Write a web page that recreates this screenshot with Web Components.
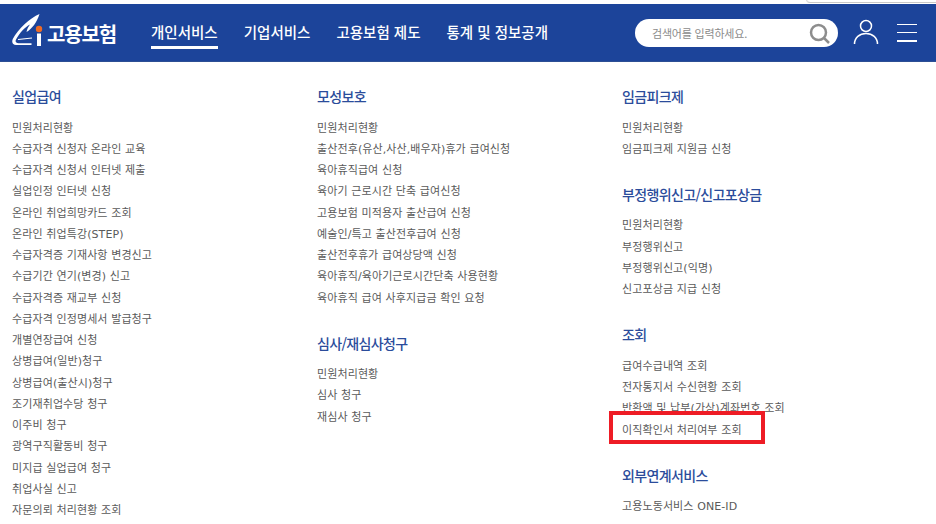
<!DOCTYPE html>
<html lang="ko"><head><meta charset="utf-8">
<style>
html,body{margin:0;padding:0;background:#fff;height:524px;overflow:hidden}
body{font-family:"DejaVu Sans","Noto Sans CJK KR",sans-serif;position:relative}
</style></head><body>
<template id="tpl-header">
<style>
:host{display:block;margin-top:4px;height:57px;background:#1c449a;border-bottom:1px solid #2d4f94;position:relative;font-family:"Noto Sans CJK KR",sans-serif}
.bar{display:flex;align-items:flex-start;height:57px;padding-left:12px}
.logo{display:flex;align-items:flex-start;width:105px;color:#fff;font-weight:700;font-size:20px;letter-spacing:-1.150px;white-space:nowrap;line-height:30px}
.logo svg{margin-top:10px;flex:none}
.logo span{margin:15px 0 0 4px;display:block}
nav{display:flex;margin:18px 0 0 34px;gap:26px;color:#fff;font-size:14.5px;font-weight:500}
.search{display:flex;align-items:center;justify-content:space-between;box-sizing:border-box;position:absolute;left:635px;top:15px;width:203px;height:28px;background:#fff;border-radius:14px;padding:0 7px 0 17px;color:#8b8b8b;font-size:11px;letter-spacing:-.2px}
.user{position:absolute;left:853px;top:15px}
.menu{position:absolute;left:897px;top:19.500px;width:20px;height:18px;display:flex;flex-direction:column;justify-content:space-between}
.menu i{display:block;height:1.500px;background:#fff}
</style>
<div class="bar">
<div class="logo"><svg width="31" height="33" viewBox="0 0 31 33"><path d="M27.500 0C18 4 6 15 .8 25c-1.500 3.500.2 6 3.200 6h15.500v-1.800H6.500c-2.500 0-3.500-1.700-2.500-3.700C8 18.500 13 13 18 10.500 16 13 15 15.500 14.500 18 20 15 25 8 27.500 0Z" fill="#fff"/><path d="M6 25.500l14-1.500" stroke="#fff" stroke-width="1.200" fill="none"/><circle cx="27" cy="15" r="3.200" fill="#ee6b25"/><rect x="25" y="19.500" width="4" height="12.500" fill="#fff"/></svg><span><slot name="logo"></slot></span></div>
<nav><slot></slot></nav>
</div>
<div class="search"><span>검색어를 입력하세요.</span><svg width="23" height="23" viewBox="0 0 23 23" fill="none" stroke="#8d8d8d"><circle cx="10.500" cy="10.500" r="7.500" stroke-width="2.500"/><path d="M16 16l5 5" stroke-width="2.500"/></svg></div>
<svg class="user" width="26" height="26" viewBox="0 0 26 26" fill="none" stroke="#fff" stroke-width="1.500"><circle cx="13" cy="7" r="5.500"/><path d="M1.500 25C1.500 18.500 6.500 14.500 13 14.500S24.500 18.500 24.500 25"/></svg>
<div class="menu"><i></i><i></i><i></i></div>
</template>
<template id="tpl-link">
<style>
:host{display:block;line-height:20px;padding-bottom:4px;border-bottom:3px solid transparent;white-space:nowrap}
:host([active]){border-bottom-color:#fff}
</style><slot></slot>
</template>
<template id="tpl-group">
<style>
:host{display:block;margin-bottom:23.800px}
h2{margin:0 0 10.600px;font-family:"Noto Sans CJK KR",sans-serif;font-size:14px;line-height:21px;font-weight:500;color:#2b4c9b;letter-spacing:-.65px;white-space:nowrap}
</style>
<h2><slot name="title"></slot></h2>
<slot></slot>
</template>
<template id="tpl-item">
<style>
:host{display:block;position:relative;height:21.250px;line-height:21.250px;font-size:11px;letter-spacing:.1px;color:#5a5a5a;white-space:nowrap}
.mark{position:absolute;left:-13px;top:-9px;width:148px;height:25px;border:4px solid #ee1c25;display:none}
:host([marked]) .mark{display:block}
</style>
<slot></slot><span class="mark"></span>
</template>
<template id="tpl-columns">
<style>:host{display:grid;grid-template-columns:305px 305px 1fr;padding:24px 0 0 12px}</style>
<slot></slot>
</template>
<template id="tpl-edge">
<style>:host{display:block;position:absolute;left:806px;top:-6px;width:140px;height:8px;border-left:1px solid #d8d8d8;border-bottom:1px solid #c9c9c9;border-bottom-left-radius:4px}</style>
</template>
<script>
for (const [name,id] of [['ei-header','tpl-header'],['nav-link','tpl-link'],['menu-group','tpl-group'],['menu-item','tpl-item'],['menu-columns','tpl-columns'],['window-edge','tpl-edge']]) {
  customElements.define(name, class extends HTMLElement {
    constructor(){super();this.attachShadow({mode:'open'}).appendChild(document.getElementById(id).content.cloneNode(true));}
  });
}
</script>
<window-edge></window-edge>
<ei-header>
<span slot="logo">고용보험</span>
<nav-link active>개인서비스</nav-link>
<nav-link>기업서비스</nav-link>
<nav-link>고용보험 제도</nav-link>
<nav-link>통계 및 정보공개</nav-link>
</ei-header>
<menu-columns>
<div>
<menu-group><span slot="title">실업급여</span>
<menu-item>민원처리현황</menu-item><menu-item>수급자격 신청자 온라인 교육</menu-item><menu-item>수급자격 신청서 인터넷 제출</menu-item><menu-item>실업인정 인터넷 신청</menu-item><menu-item>온라인 취업희망카드 조회</menu-item><menu-item>온라인 취업특강(STEP)</menu-item><menu-item>수급자격증 기재사항 변경신고</menu-item><menu-item>수급기간 연기(변경) 신고</menu-item><menu-item>수급자격증 재교부 신청</menu-item><menu-item>수급자격 인정명세서 발급청구</menu-item><menu-item>개별연장급여 신청</menu-item><menu-item>상병급여(일반)청구</menu-item><menu-item>상병급여(출산시)청구</menu-item><menu-item>조기재취업수당 청구</menu-item><menu-item>이주비 청구</menu-item><menu-item>광역구직활동비 청구</menu-item><menu-item>미지급 실업급여 청구</menu-item><menu-item>취업사실 신고</menu-item><menu-item>자문의뢰 처리현황 조회</menu-item>
</menu-group>
</div>
<div>
<menu-group><span slot="title">모성보호</span>
<menu-item>민원처리현황</menu-item><menu-item>출산전후(유산,사산,배우자)휴가 급여신청</menu-item><menu-item>육아휴직급여 신청</menu-item><menu-item>육아기 근로시간 단축 급여신청</menu-item><menu-item>고용보험 미적용자 출산급여 신청</menu-item><menu-item>예술인/특고 출산전후급여 신청</menu-item><menu-item>출산전후휴가 급여상당액 신청</menu-item><menu-item>육아휴직/육아기근로시간단축 사용현황</menu-item><menu-item>육아휴직 급여 사후지급금 확인 요청</menu-item>
</menu-group>
<menu-group><span slot="title">심사/재심사청구</span>
<menu-item>민원처리현황</menu-item><menu-item>심사 청구</menu-item><menu-item>재심사 청구</menu-item>
</menu-group>
</div>
<div>
<menu-group><span slot="title">임금피크제</span>
<menu-item>민원처리현황</menu-item><menu-item>임금피크제 지원금 신청</menu-item>
</menu-group>
<menu-group><span slot="title">부정행위신고/신고포상금</span>
<menu-item>민원처리현황</menu-item><menu-item>부정행위신고</menu-item><menu-item>부정행위신고(익명)</menu-item><menu-item>신고포상금 지급 신청</menu-item>
</menu-group>
<menu-group><span slot="title">조회</span>
<menu-item>급여수급내역 조회</menu-item><menu-item>전자통지서 수신현황 조회</menu-item><menu-item>반환액 및 납부(가상)계좌번호 조회</menu-item><menu-item marked>이직확인서 처리여부 조회</menu-item>
</menu-group>
<menu-group><span slot="title">외부연계서비스</span>
<menu-item>고용노동서비스 ONE-ID</menu-item>
</menu-group>
</div>
</menu-columns>
</body></html>
